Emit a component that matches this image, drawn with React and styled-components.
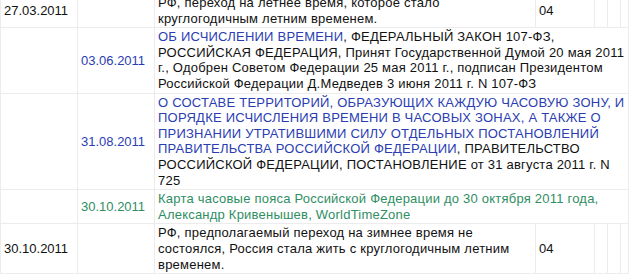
import React from 'react';
import styled, { createGlobalStyle } from 'styled-components';

const GlobalStyle = createGlobalStyle`
html, body {
    margin: 0;
    padding: 0;
    background: #fff;
    overflow: hidden;
}
`

const Scroller = styled.div`
margin-top: -7px;
`

const Table = styled.table`
border-collapse: collapse;
table-layout: fixed;
width: 629px;
font-family: "Liberation Sans", Arial, sans-serif;
font-size: 13px;
line-height: 15.6px;
color: #111;
`

const Cell = styled.td`
border: 1px solid #ececec;
padding: 1px 3px;
vertical-align: middle;
letter-spacing: ${p => p.$wide ? '0.22px' : '0'};
color: ${p => p.$tone === 'blue' ? '#2a3db3' : p.$tone === 'green' ? '#2f8e63' : '#111'};
`

const Link = styled.span`
color: ${p => p.$tone === 'green' ? '#2f8e63' : '#2a3db3'};
`

const widths = [77, 77, 381, 59, 13, 13, 8];

const EventRow = ({ date, text, code }) => (
    <tr>
        <Cell>{date}</Cell>
        <Cell />
        <Cell $wide>{text}</Cell>
        <Cell>{code}</Cell>
        <Cell />
        <Cell />
        <Cell />
    </tr>
)

const SourceRow = ({ date, tone, children }) => (
    <tr>
        <Cell />
        <Cell $tone={tone}>{date}</Cell>
        <Cell $wide colSpan={5}>{children}</Cell>
    </tr>
)

export default function App() {
    return (
        <>
            <GlobalStyle />
            <Scroller>
                <Table>
                    <colgroup>
                        {widths.map((w, i) => <col key={i} style={{ width: w }} />)}
                    </colgroup>
                    <tbody>
                        <EventRow
                            date="27.03.2011"
                            text="РФ, переход на летнее время, которое стало круглогодичным летним временем."
                            code="04"
                        />
                        <SourceRow date="03.06.2011" tone="blue">
                            <Link>ОБ ИСЧИСЛЕНИИ ВРЕМЕНИ</Link>, ФЕДЕРАЛЬНЫЙ ЗАКОН 107-ФЗ, РОССИЙСКАЯ ФЕДЕРАЦИЯ, Принят Государственной Думой 20 мая 2011 г., Одобрен Советом Федерации 25 мая 2011 г., подписан Президентом Российской Федерации Д.Медведев 3 июня 2011 г. N 107-ФЗ
                        </SourceRow>
                        <SourceRow date="31.08.2011" tone="blue">
                            <Link>О СОСТАВЕ ТЕРРИТОРИЙ, ОБРАЗУЮЩИХ КАЖДУЮ ЧАСОВУЮ ЗОНУ, И ПОРЯДКЕ ИСЧИСЛЕНИЯ ВРЕМЕНИ В ЧАСОВЫХ ЗОНАХ, А ТАКЖЕ О ПРИЗНАНИИ УТРАТИВШИМИ СИЛУ ОТДЕЛЬНЫХ ПОСТАНОВЛЕНИЙ ПРАВИТЕЛЬСТВА РОССИЙСКОЙ ФЕДЕРАЦИИ</Link>, ПРАВИТЕЛЬСТВО РОССИЙСКОЙ ФЕДЕРАЦИИ, ПОСТАНОВЛЕНИЕ от 31 августа 2011 г. N 725
                        </SourceRow>
                        <SourceRow date="30.10.2011" tone="green">
                            <Link $tone="green">Карта часовые пояса Российской Федерации до 30 октября 2011 года, Александр Кривенышев, WorldTimeZone</Link>
                        </SourceRow>
                        <EventRow
                            date="30.10.2011"
                            text="РФ, предполагаемый переход на зимнее время не состоялся, Россия стала жить с круглогодичным летним временем."
                            code="04"
                        />
                    </tbody>
                </Table>
            </Scroller>
        </>
    )
}
